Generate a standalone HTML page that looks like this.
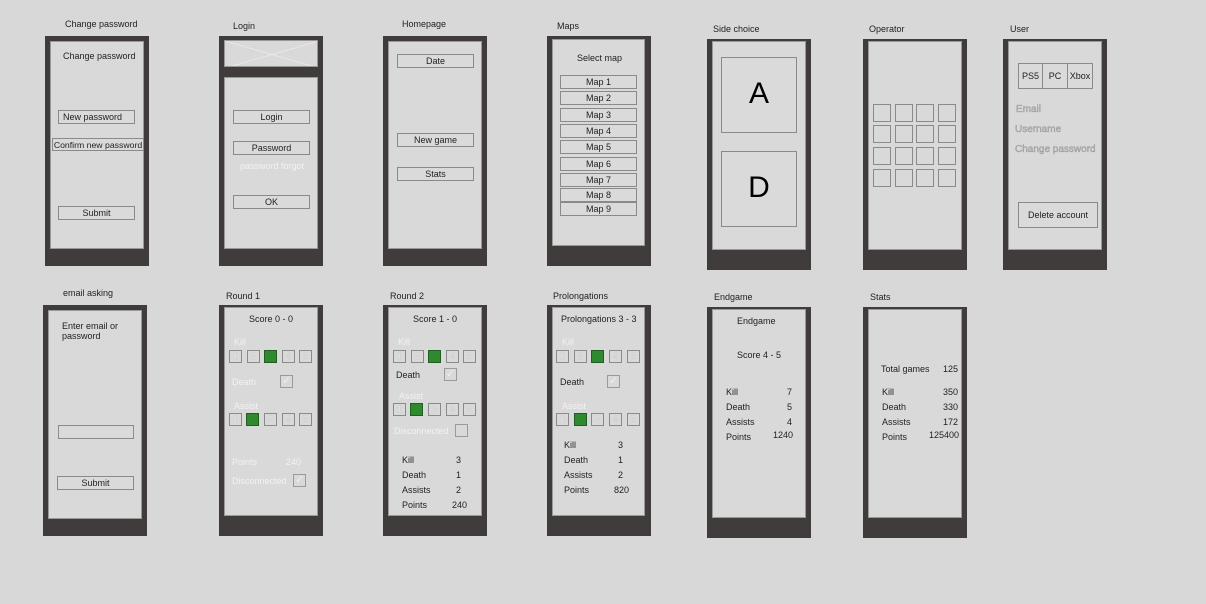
<!DOCTYPE html>
<html><head><meta charset="utf-8"><style>
*{margin:0;padding:0;box-sizing:border-box}
body{width:1206px;height:604px;background:#d8d8d8;position:relative;overflow:hidden;font-family:"Liberation Sans",sans-serif;color:#1e1e1e}
.f{position:absolute;background:#403c3b}
.s{position:absolute;background:#d9d9d9;border:1px solid #999}
.t{position:absolute;font-size:9px;white-space:nowrap;line-height:10px}
.w{color:#f2f2f2}
.g{color:#b8b8b8;font-size:10px;-webkit-text-stroke:0.3px #8a8a8a}
.b{position:absolute;border:1px solid #8a8a8a;background:#dadada;font-size:9px;text-align:center;white-space:nowrap;line-height:12px}
.sq{position:absolute;width:13px;height:13px;border:1px solid #8a8a8a;background:#d9d9d9;color:#f6f6f6;font-size:9px;text-align:center;line-height:11px;-webkit-text-stroke:0.2px #aaa}
.gr{background:#2f8a2f;border-color:#1e5e1e}
.ck{position:absolute;width:13px;height:13px;border:1px solid #9a9a9a;background:#d9d9d9;color:#eee;font-size:11px;line-height:11px;text-align:center}
.op{position:absolute;width:18px;height:18px;border:1px solid #8a8a8a}
</style></head><body>

<div class="t" style="left:65px;top:19px">Change password</div>
<div class="t" style="left:233px;top:21px">Login</div>
<div class="t" style="left:402px;top:19px">Homepage</div>
<div class="t" style="left:557px;top:21px">Maps</div>
<div class="t" style="left:713px;top:24px">Side choice</div>
<div class="t" style="left:869px;top:24px">Operator</div>
<div class="t" style="left:1010px;top:24px">User</div>
<div class="t" style="left:63px;top:288px">email asking</div>
<div class="t" style="left:226px;top:291px">Round 1</div>
<div class="t" style="left:390px;top:291px">Round 2</div>
<div class="t" style="left:553px;top:291px">Prolongations</div>
<div class="t" style="left:714px;top:292px">Endgame</div>
<div class="t" style="left:870px;top:292px">Stats</div>

<div class="f" style="left:45px;top:36px;width:104px;height:230px"></div>
<div class="s" style="left:50px;top:41px;width:94px;height:208px"></div>
<div class="t" style="left:63px;top:51px">Change password</div>
<div class="b" style="left:58px;top:110px;width:77px;height:14px;text-align:left;padding-left:4px">New password</div>
<div class="b" style="left:52px;top:138px;width:92px;height:13px;font-size:8.7px">Confirm new password</div>
<div class="b" style="left:58px;top:206px;width:77px;height:14px">Submit</div>

<div class="f" style="left:219px;top:36px;width:104px;height:230px"></div>
<div class="s" style="left:224px;top:40px;width:94px;height:27px;overflow:hidden">
<svg width="94" height="27" style="position:absolute;left:0;top:0"><line x1="0" y1="0" x2="94" y2="27" stroke="#ececec" stroke-width="0.7"/><line x1="94" y1="0" x2="0" y2="27" stroke="#ececec" stroke-width="0.7"/></svg></div>
<div class="s" style="left:224px;top:77px;width:94px;height:172px"></div>
<div class="b" style="left:233px;top:110px;width:77px;height:14px">Login</div>
<div class="b" style="left:233px;top:141px;width:77px;height:14px">Password</div>
<div class="t w" style="left:240px;top:161px">password forgot</div>
<div class="b" style="left:233px;top:195px;width:77px;height:14px">OK</div>

<div class="f" style="left:383px;top:36px;width:104px;height:230px"></div>
<div class="s" style="left:388px;top:41px;width:94px;height:208px"></div>
<div class="b" style="left:397px;top:54px;width:77px;height:14px">Date</div>
<div class="b" style="left:397px;top:133px;width:77px;height:14px">New game</div>
<div class="b" style="left:397px;top:167px;width:77px;height:14px">Stats</div>

<div class="f" style="left:547px;top:36px;width:104px;height:230px"></div>
<div class="s" style="left:552px;top:39px;width:93px;height:207px"></div>
<div class="t" style="left:577px;top:53px">Select map</div>
<div class="b" style="left:560px;top:75px;width:77px;height:14px">Map 1</div>
<div class="b" style="left:560px;top:91px;width:77px;height:14px">Map 2</div>
<div class="b" style="left:560px;top:108px;width:77px;height:14px">Map 3</div>
<div class="b" style="left:560px;top:124px;width:77px;height:14px">Map 4</div>
<div class="b" style="left:560px;top:140px;width:77px;height:14px">Map 5</div>
<div class="b" style="left:560px;top:157px;width:77px;height:14px">Map 6</div>
<div class="b" style="left:560px;top:173px;width:77px;height:14px">Map 7</div>
<div class="b" style="left:560px;top:188px;width:77px;height:14px">Map 8</div>
<div class="b" style="left:560px;top:202px;width:77px;height:14px">Map 9</div>

<div class="f" style="left:707px;top:39px;width:104px;height:231px"></div>
<div class="s" style="left:712px;top:41px;width:94px;height:209px"></div>
<div class="b" style="left:721px;top:57px;width:76px;height:76px;font-size:30px;line-height:72px;color:#000">A</div>
<div class="b" style="left:721px;top:151px;width:76px;height:76px;font-size:30px;line-height:72px;color:#000">D</div>

<div class="f" style="left:863px;top:39px;width:104px;height:231px"></div>
<div class="s" style="left:868px;top:41px;width:94px;height:209px"></div>
<div class="op" style="left:873px;top:104px"></div><div class="op" style="left:895px;top:104px"></div><div class="op" style="left:916px;top:104px"></div><div class="op" style="left:938px;top:104px"></div>
<div class="op" style="left:873px;top:125px"></div><div class="op" style="left:895px;top:125px"></div><div class="op" style="left:916px;top:125px"></div><div class="op" style="left:938px;top:125px"></div>
<div class="op" style="left:873px;top:147px"></div><div class="op" style="left:895px;top:147px"></div><div class="op" style="left:916px;top:147px"></div><div class="op" style="left:938px;top:147px"></div>
<div class="op" style="left:873px;top:169px"></div><div class="op" style="left:895px;top:169px"></div><div class="op" style="left:916px;top:169px"></div><div class="op" style="left:938px;top:169px"></div>

<div class="f" style="left:1003px;top:39px;width:104px;height:231px"></div>
<div class="s" style="left:1008px;top:41px;width:94px;height:209px"></div>
<div class="b" style="left:1018px;top:63px;width:25px;height:26px;line-height:24px">PS5</div>
<div class="b" style="left:1042px;top:63px;width:26px;height:26px;line-height:24px">PC</div>
<div class="b" style="left:1067px;top:63px;width:26px;height:26px;line-height:24px">Xbox</div>
<div class="t g" style="left:1016px;top:105px">Email</div>
<div class="t g" style="left:1015px;top:125px">Username</div>
<div class="t g" style="left:1015px;top:145px">Change password</div>
<div class="b" style="left:1018px;top:202px;width:80px;height:26px;line-height:24px">Delete account</div>

<div class="f" style="left:43px;top:305px;width:104px;height:231px"></div>
<div class="s" style="left:48px;top:310px;width:94px;height:209px"></div>
<div class="t" style="left:62px;top:321px">Enter email or<br>password</div>
<div class="b" style="left:58px;top:425px;width:76px;height:14px"></div>
<div class="b" style="left:57px;top:476px;width:77px;height:14px">Submit</div>

<div class="f" style="left:219px;top:305px;width:104px;height:231px"></div>
<div class="s" style="left:224px;top:307px;width:94px;height:209px"></div>
<div class="t" style="left:249px;top:314px">Score 0 - 0</div>
<div class="t w" style="left:234px;top:337px">Kill</div>
<div class="sq" style="left:229px;top:350px">1</div><div class="sq" style="left:247px;top:350px">2</div><div class="sq gr" style="left:264px;top:350px"></div><div class="sq" style="left:282px;top:350px">4</div><div class="sq" style="left:299px;top:350px">5</div>
<div class="t w" style="left:232px;top:377px">Death</div>
<div class="ck" style="left:280px;top:375px">✓</div>
<div class="t w" style="left:234px;top:401px">Assist</div>
<div class="sq" style="left:229px;top:413px">1</div><div class="sq gr" style="left:246px;top:413px"></div><div class="sq" style="left:264px;top:413px">3</div><div class="sq" style="left:282px;top:413px">4</div><div class="sq" style="left:299px;top:413px">5</div>
<div class="t w" style="left:232px;top:457px">Points</div>
<div class="t w" style="left:286px;top:457px">240</div>
<div class="t w" style="left:232px;top:476px">Disconnected</div>
<div class="ck" style="left:293px;top:474px">✓</div>

<div class="f" style="left:383px;top:305px;width:104px;height:231px"></div>
<div class="s" style="left:388px;top:307px;width:94px;height:209px"></div>
<div class="t" style="left:413px;top:314px">Score 1 - 0</div>
<div class="t w" style="left:398px;top:337px">Kill</div>
<div class="sq" style="left:393px;top:350px">1</div><div class="sq" style="left:411px;top:350px">2</div><div class="sq gr" style="left:428px;top:350px"></div><div class="sq" style="left:446px;top:350px">4</div><div class="sq" style="left:463px;top:350px">5</div>
<div class="t" style="left:396px;top:370px">Death</div>
<div class="ck" style="left:444px;top:368px">✓</div>
<div class="t w" style="left:399px;top:391px">Assist</div>
<div class="sq" style="left:393px;top:403px">1</div><div class="sq gr" style="left:410px;top:403px"></div><div class="sq" style="left:428px;top:403px">3</div><div class="sq" style="left:446px;top:403px">4</div><div class="sq" style="left:463px;top:403px">5</div>
<div class="t w" style="left:394px;top:426px">Disconnected</div>
<div class="ck" style="left:455px;top:424px"></div>
<div class="t" style="left:402px;top:455px">Kill</div><div class="t" style="left:456px;top:455px">3</div>
<div class="t" style="left:402px;top:470px">Death</div><div class="t" style="left:456px;top:470px">1</div>
<div class="t" style="left:402px;top:485px">Assists</div><div class="t" style="left:456px;top:485px">2</div>
<div class="t" style="left:402px;top:500px">Points</div><div class="t" style="left:452px;top:500px">240</div>

<div class="f" style="left:547px;top:305px;width:104px;height:231px"></div>
<div class="s" style="left:552px;top:307px;width:93px;height:209px"></div>
<div class="t" style="left:561px;top:314px">Prolongations 3 - 3</div>
<div class="t w" style="left:562px;top:337px">Kill</div>
<div class="sq" style="left:556px;top:350px">1</div><div class="sq" style="left:574px;top:350px">2</div><div class="sq gr" style="left:591px;top:350px"></div><div class="sq" style="left:609px;top:350px">4</div><div class="sq" style="left:627px;top:350px">5</div>
<div class="t" style="left:560px;top:377px">Death</div>
<div class="ck" style="left:607px;top:375px">✓</div>
<div class="t w" style="left:562px;top:401px">Assist</div>
<div class="sq" style="left:556px;top:413px">1</div><div class="sq gr" style="left:574px;top:413px"></div><div class="sq" style="left:591px;top:413px">3</div><div class="sq" style="left:609px;top:413px">4</div><div class="sq" style="left:627px;top:413px">5</div>
<div class="t" style="left:564px;top:440px">Kill</div><div class="t" style="left:618px;top:440px">3</div>
<div class="t" style="left:564px;top:455px">Death</div><div class="t" style="left:618px;top:455px">1</div>
<div class="t" style="left:564px;top:470px">Assists</div><div class="t" style="left:618px;top:470px">2</div>
<div class="t" style="left:564px;top:485px">Points</div><div class="t" style="left:614px;top:485px">820</div>

<div class="f" style="left:707px;top:307px;width:104px;height:231px"></div>
<div class="s" style="left:712px;top:309px;width:94px;height:209px"></div>
<div class="t" style="left:737px;top:316px">Endgame</div>
<div class="t" style="left:737px;top:350px">Score 4 - 5</div>
<div class="t" style="left:726px;top:387px">Kill</div><div class="t" style="left:787px;top:387px">7</div>
<div class="t" style="left:726px;top:402px">Death</div><div class="t" style="left:787px;top:402px">5</div>
<div class="t" style="left:726px;top:417px">Assists</div><div class="t" style="left:787px;top:417px">4</div>
<div class="t" style="left:726px;top:432px">Points</div><div class="t" style="left:773px;top:430px">1240</div>

<div class="f" style="left:863px;top:307px;width:104px;height:231px"></div>
<div class="s" style="left:868px;top:309px;width:94px;height:209px"></div>
<div class="t" style="left:881px;top:364px">Total games</div><div class="t" style="left:943px;top:364px">125</div>
<div class="t" style="left:882px;top:387px">Kill</div><div class="t" style="left:943px;top:387px">350</div>
<div class="t" style="left:882px;top:402px">Death</div><div class="t" style="left:943px;top:402px">330</div>
<div class="t" style="left:882px;top:417px">Assists</div><div class="t" style="left:943px;top:417px">172</div>
<div class="t" style="left:882px;top:432px">Points</div><div class="t" style="left:929px;top:430px">125400</div>

</body></html>
